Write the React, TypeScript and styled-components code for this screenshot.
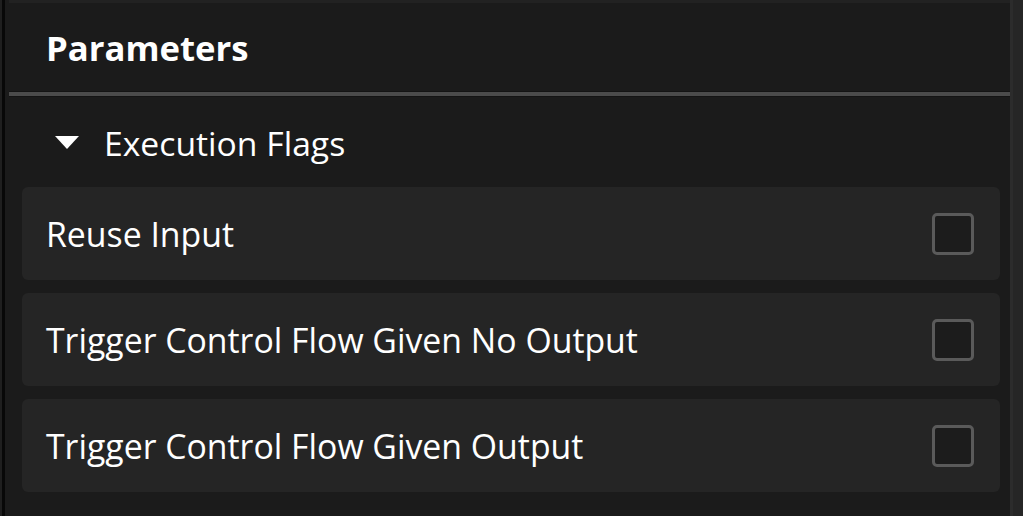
import styled, {createGlobalStyle} from 'styled-components';

const GlobalStyle = createGlobalStyle`
    html, body {
        margin: 0;
        padding: 0;
        background: #1b1b1b;
        overflow: hidden;
    }
`;

const flags = ['Reuse Input', 'Trigger Control Flow Given No Output', 'Trigger Control Flow Given Output'];

export default function App() {
    return (
        <>
            <GlobalStyle />
            <Root>
                <LeftEdge />
                <Panel>
                    <Header>
                        <Title>Parameters</Title>
                    </Header>
                    <Separator />
                    <GroupHeader>
                        <Caret />
                        <GroupTitle>Execution Flags</GroupTitle>
                    </GroupHeader>
                    <Rows>
                        {flags.map((f) => (
                            <FlagRow key={f}>
                                <Label>{f}</Label>
                                <Checkbox />
                            </FlagRow>
                        ))}
                    </Rows>
                </Panel>
                <RightEdge />
            </Root>
        </>
    );
}

const Root = styled.div`
    width: 1023px;
    height: 516px;
    display: flex;
    flex-direction: row;
    overflow: hidden;
    font-family: 'Open Sans', 'Noto Sans', sans-serif;
    color: #ffffff;
`;
const LeftEdge = styled.div`
    width: 2px;
    flex-shrink: 0;
    background: #1f1f1f;
    border-right: 3px solid #080808;
    margin-right: 4px;
`;
const Panel = styled.div`
    flex: 1;
    display: flex;
    flex-direction: column;
    background: #1b1b1b;
    border-top: 3px solid #222222;
`;
const RightEdge = styled.div`
    width: 10px;
    flex-shrink: 0;
    background: #262626;
    border-left: 3px solid #2c2c2c;
`;
const Header = styled.div`
    height: 88px;
    display: flex;
    align-items: center;
    padding-left: 37px;
`;
const Title = styled.div`
    font-size: 34.7px;
    font-weight: 700;
`;
const Separator = styled.div`
    height: 4px;
    background: #4b4b4b;
    border-top: 1px solid #141414;
    border-bottom: 1px solid #141414;
`;
const GroupHeader = styled.div`
    height: 90px;
    display: flex;
    align-items: center;
    padding-left: 46px;
    padding-top: 2px;
    box-sizing: border-box;
    gap: 25px;
`;
const Caret = styled.div`
    width: 0;
    height: 0;
    border-left: 12px solid transparent;
    border-right: 12px solid transparent;
    border-top: 13px solid #ffffff;
    margin-bottom: 2px;
`;
const GroupTitle = styled.div`
    font-size: 33.7px;
    font-weight: 400;
`;
const Rows = styled.div`
    display: flex;
    flex-direction: column;
    gap: 13px;
    padding-left: 13px;
    padding-right: 10px;
`;
const FlagRow = styled.div`
    height: 93px;
    display: flex;
    align-items: center;
    justify-content: space-between;
    background: #252525;
    border-radius: 6px;
    padding-left: 24px;
    padding-right: 26px;
`;
const Label = styled.div`
    font-size: 33.8px;
    font-weight: 400;
`;
const Checkbox = styled.div`
    width: 36px;
    height: 36px;
    border: 3px solid #5a5a5a;
    border-radius: 5px;
    background: #1c1c1c;
`;
